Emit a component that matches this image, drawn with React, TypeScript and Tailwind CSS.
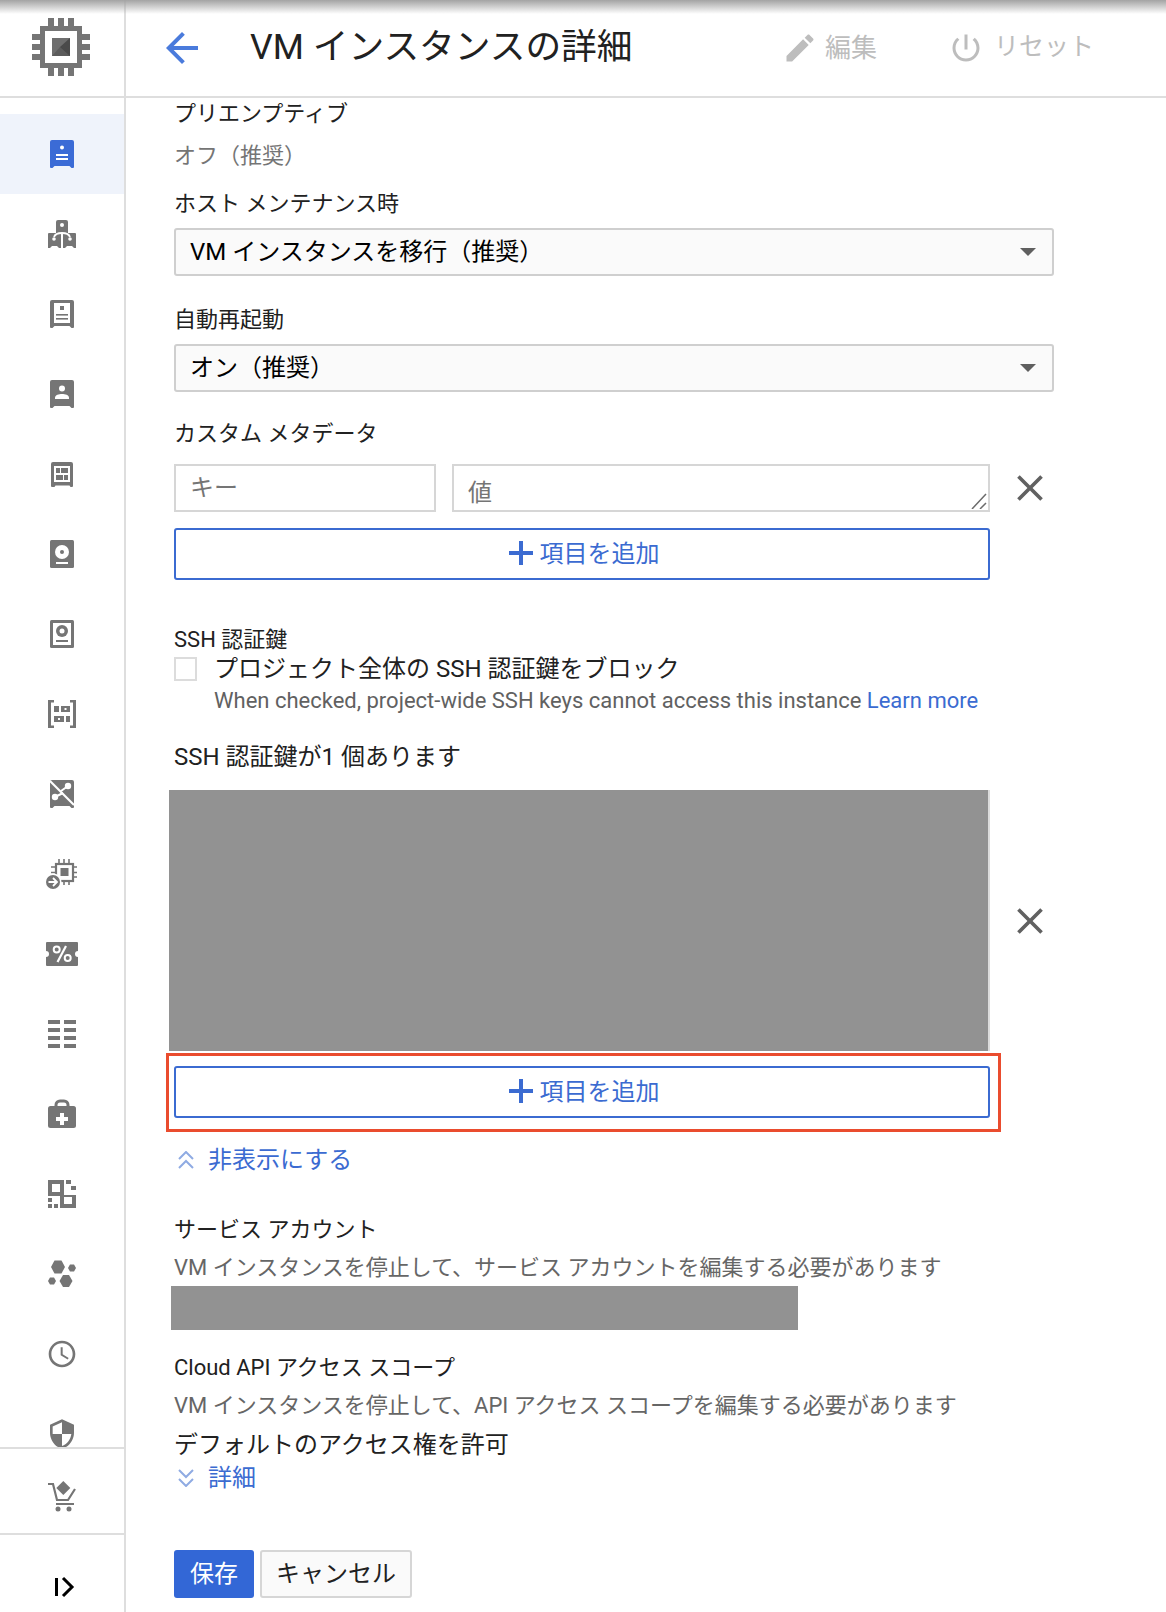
import { type ReactNode } from "react"

const BODY = "M6 2h20a2 2 0 0 1 2 2v25a1 1 0 0 1-1 1h-1.5l-2-2h-15l-2 2H5a1 1 0 0 1-1-1V4a2 2 0 0 1 2-2z"

function Icon({ children, className = "text-[#757575]" }: { children: ReactNode; className?: string }) {
  return (
    <svg width="32" height="32" viewBox="0 0 32 32" fill="currentColor" className={className}>
      {children}
    </svg>
  )
}

const navIcons: ReactNode[] = [
  <Icon className="text-[#3b6bd6]">
    <path d={BODY} />
    <circle cx="16" cy="9.5" r="2" fill="#fff" />
    <rect x="10" y="16" width="12" height="2" fill="#fff" />
    <rect x="10" y="20" width="12" height="2" fill="#fff" />
  </Icon>,
  <Icon>
    <path d="M12 2h8a2 2 0 0 1 2 2v13H10V4a2 2 0 0 1 2-2z" />
    <path d="M3 15h12v15h-2l-2-2H6l-2 2H2V16a1 1 0 0 1 1-1z" />
    <path d="M17 15h12a1 1 0 0 1 1 1v14h-2l-2-2h-5l-2 2h-2z" />
    <circle cx="16" cy="7" r="2" fill="#fff" />
    <path d="M8 19c1-3 4-4 8-4s7 1 8 4" stroke="#fff" strokeWidth="1.800" fill="none" />
    <path d="M16 15v15" stroke="#fff" strokeWidth="2" fill="none" />
    <circle cx="8" cy="21" r="1.800" fill="#fff" />
    <circle cx="24" cy="21" r="1.800" fill="#fff" />
  </Icon>,
  <Icon>
    <path d={BODY} />
    <rect x="8" y="5" width="16" height="20" fill="#fff" />
    <rect x="14" y="8" width="4" height="4" />
    <rect x="10" y="16" width="12" height="1.6" />
    <rect x="10" y="20" width="12" height="1.6" />
  </Icon>,
  <Icon>
    <path d={BODY} />
    <circle cx="16" cy="10.5" r="3" fill="#fff" />
    <path d="M9 21v-1.5c0-2.5 4-3.5 7-3.5s7 1 7 3.5V21z" fill="#fff" />
  </Icon>,
  <Icon>
    <path d="M7 4h18a2 2 0 0 1 2 2v22a1 1 0 0 1-1 1h-1.5l-1-1.5H9.500l-1 1.500H6a1 1 0 0 1-1-1V6a2 2 0 0 1 2-2z" />
    <rect x="8" y="8" width="16" height="16" fill="#fff" />
    <rect x="10" y="10" width="4" height="5" />
    <rect x="15" y="10" width="7" height="5" />
    <rect x="10" y="17" width="7" height="5" />
    <rect x="18" y="17" width="4" height="5" />
  </Icon>,
  <Icon>
    <rect x="4" y="2" width="24" height="28" rx="1.500" />
    <circle cx="16" cy="14" r="7" fill="#fff" />
    <circle cx="16" cy="14" r="2" />
    <rect x="10" y="24" width="12" height="2" fill="#fff" />
  </Icon>,
  <Icon>
    <rect x="4" y="2" width="24" height="28" rx="1.500" />
    <rect x="7" y="5" width="18" height="22" fill="#fff" />
    <circle cx="16" cy="13" r="6" />
    <circle cx="16" cy="13" r="2.500" fill="#fff" />
    <rect x="10" y="22" width="12" height="2" />
  </Icon>,
  <Icon>
    <path d="M2 2h6v2.500H5v23h3V30H2zM30 2h-6v2.500h3v23h-3V30h6z" />
    <rect x="8" y="8" width="5" height="6" />
    <path fillRule="evenodd" d="M15 8h9v6h-9zM18.500 10v2h2v-2z" />
    <path fillRule="evenodd" d="M8 18h10v6H8zM12 20v2h2v-2z" />
    <rect x="20" y="18" width="4" height="6" />
  </Icon>,
  <Icon>
    <path d={BODY} />
    <path d="M4 3l24 24" stroke="#fff" strokeWidth="2.200" fill="none" />
    <path d="M15 13l7-5M17 15l-8 4" stroke="#fff" strokeWidth="2" fill="none" />
    <circle cx="22" cy="8" r="3.200" fill="#fff" />
    <circle cx="9" cy="19" r="3.200" fill="#fff" />
  </Icon>,
  <Icon>
    <path d="M13 1v4M18 1v4M23 1v4M13 24v3M18 24v3M23 24v3M5 9h4M5 14.500h4M28 9h3M28 14.500h3M28 19h3" stroke="currentColor" strokeWidth="1.600" fill="none" />
    <rect x="10" y="6" width="17" height="17" fill="none" stroke="currentColor" strokeWidth="2.200" />
    <rect x="14.500" y="10" width="8" height="8" />
    <circle cx="7" cy="24" r="8.500" fill="#fff" />
    <circle cx="7" cy="24" r="7" />
    <path d="M2.500 24h8M7 20l4 4-4 4" stroke="#fff" strokeWidth="1.800" fill="none" />
  </Icon>,
  <Icon>
    <path d="M1 4h30a1 1 0 0 1 1 1v8a3 3 0 0 0 0 6v8a1 1 0 0 1-1 1H1a1 1 0 0 1-1-1v-8a3 3 0 0 0 0-6V5a1 1 0 0 1 1-1z" />
    <circle cx="10.700" cy="11.500" r="3" fill="none" stroke="#fff" strokeWidth="2" />
    <circle cx="21.700" cy="20" r="3" fill="none" stroke="#fff" strokeWidth="2" />
    <path d="M20 8L11.500 24" stroke="#fff" strokeWidth="2.200" fill="none" />
  </Icon>,
  <Icon>
    {[2, 10, 18, 26].map((y) => (
      <g key={y}>
        <rect x="2" y={y} width="12" height="4" />
        <rect x="18" y={y} width="12" height="4" />
      </g>
    ))}
  </Icon>,
  <Icon>
    <path d="M10 9V7a4 4 0 0 1 4-4h4a4 4 0 0 1 4 4v2" fill="none" stroke="currentColor" strokeWidth="3" />
    <rect x="2" y="8" width="28" height="22" rx="2.500" />
    <rect x="14" y="15" width="4" height="12" fill="#fff" />
    <rect x="10" y="19" width="12" height="4" fill="#fff" />
  </Icon>,
  <Icon>
    <path fillRule="evenodd" d="M2 2h16v16H2zM6 6v8h8V6z" />
    <path fillRule="evenodd" d="M14 17h16v13H14zM18 19v7h8v-7z" />
    <rect x="20" y="2" width="5" height="4" />
    <rect x="25" y="8" width="5" height="4" />
    <rect x="2" y="20" width="4" height="4" />
    <rect x="2" y="26" width="4" height="4" />
    <rect x="8" y="26" width="4" height="4" />
  </Icon>,
  <Icon>
    <polygon points="5,9 8.500,2.500 15.500,2.500 19,9 15.500,15.500 8.500,15.500" />
    <polygon points="22,10 24,6.500 28,6.500 30,10 28,13.500 24,13.500" />
    <polygon points="2,23 4,19.500 8,19.500 10,23 8,26.500 4,26.500" />
    <polygon points="13.500,23 17,17 23,17 26.500,23 23,29 17,29" />
  </Icon>,
  <svg width="32" height="32" viewBox="0 0 24 24" fill="currentColor" className="text-[#757575]">
    <path d="M11.990 2C6.470 2 2 6.480 2 12s4.470 10 9.990 10C17.520 22 22 17.520 22 12S17.520 2 11.990 2zM12 20c-4.420 0-8-3.580-8-8s3.580-8 8-8 8 3.580 8 8-3.580 8-8 8zm.5-13H11v6l5.250 3.150.75-1.230-4.500-2.670z" />
  </svg>,
  <svg width="32" height="32" viewBox="0 0 24 24" fill="currentColor" className="text-[#757575]">
    <path d="M12 1L3 5v6c0 5.550 3.840 10.740 9 12 5.160-1.260 9-6.450 9-12V5l-9-4zm0 10.990h7c-.53 4.120-3.280 7.790-7 8.940V12H5V6.300l7-3.110v8.800z" />
  </svg>,
]

function Logo() {
  return (
    <svg width="58" height="58" viewBox="32 18 58 58">
      <g fill="#757575">
        <rect x="48" y="18" width="6" height="8" />
        <rect x="58" y="18" width="6" height="8" />
        <rect x="68" y="18" width="6" height="8" />
        <rect x="48" y="68" width="6" height="8" />
        <rect x="58" y="68" width="6" height="8" />
        <rect x="68" y="68" width="6" height="8" />
        <rect x="32" y="34" width="8" height="6" />
        <rect x="32" y="44" width="8" height="6" />
        <rect x="32" y="54" width="8" height="6" />
        <rect x="82" y="34" width="8" height="6" />
        <rect x="82" y="44" width="8" height="6" />
        <rect x="82" y="54" width="8" height="6" />
        <path fillRule="evenodd" d="M40 26h42v42H40zM45 31v32h32V31z" />
      </g>
      <rect x="52" y="38" width="18" height="18" fill="#6e6e6e" />
      <path d="M70 38v18H60l-0-9z" fill="#4a4a4a" />
      <path d="M52 56l8-9 10 9z" fill="#5c5c5c" />
    </svg>
  )
}

function Sidebar() {
  return (
    <aside className="flex w-[126px] shrink-0 flex-col border-r-2 border-[#dedede]">
      <div className="flex h-[98px] shrink-0 items-center justify-center border-b-2 border-[#dedede] pb-[3px] pr-[2px]">
        <Logo />
      </div>
      <nav className="h-[1349px] shrink-0 overflow-hidden pt-[16px]">
        {navIcons.map((icon, i) => (
          <div key={i} className={`flex h-[80px] items-center justify-center ${i === 0 ? "bg-[#eff3fb]" : ""}`}>
            {icon}
          </div>
        ))}
      </nav>
      <div className="flex h-[86px] shrink-0 items-center justify-center border-t-2 border-[#dedede] pt-[10px]">
        <Icon>
          <path d="M17.300 1l7 7-7 7-7-7z" />
          <path d="M2 4h5l4 16h11l7-11M10 24h18" fill="none" stroke="currentColor" strokeWidth="2.200" />
          <circle cx="12" cy="29" r="2.500" />
          <circle cx="23" cy="29" r="2.500" />
        </Icon>
      </div>
      <div className="flex flex-1 items-center justify-center border-t-2 border-[#dedede] pt-[26px]">
        <svg width="32" height="32" viewBox="0 0 32 32">
          <rect x="9" y="7" width="3" height="18" fill="#000" />
          <path d="M17 7l9 9-9 9" fill="none" stroke="#000" strokeWidth="3" />
        </svg>
      </div>
    </aside>
  )
}

function Select({ value }: { value: string }) {
  return (
    <div className="flex h-[48px] w-[880px] items-center justify-between rounded-[3px] border-2 border-[#cfcfcf] bg-[#fafafa] pl-[14px] pr-[16px]">
      <span className="text-[24px] leading-none text-black">{value}</span>
      <svg width="16" height="8" viewBox="0 0 16 8">
        <path d="M0 0h16L8 8z" fill="#5f5f5f" />
      </svg>
    </div>
  )
}

function AddButton() {
  return (
    <button className="flex h-[52px] w-[816px] items-center justify-center gap-[7px] rounded-[3px] border-2 border-[#3b6bd1] bg-white pl-[4px] text-[24px] leading-none text-[#3b6bd1]">
      <svg width="24" height="24" viewBox="0 0 24 24" className="-mt-[2px]">
        <path d="M10 0h4v10h10v4H14v10h-4V14H0v-4h10z" fill="#3b6bd1" />
      </svg>
      項目を追加
    </button>
  )
}

function CloseIcon() {
  return (
    <svg width="44" height="44" viewBox="0 0 24 24" fill="#616161" className="ml-[18px] shrink-0">
      <path d="M19 6.410L17.590 5 12 10.590 6.410 5 5 6.410 10.590 12 5 17.590 6.410 19 12 13.410 17.590 19 19 17.590 13.410 12z" />
    </svg>
  )
}

function Toggle({ label, up }: { label: string; up?: boolean }) {
  return (
    <div className="flex h-[30px] items-center text-[24px] text-[#3b6bd1]">
      <svg width="16" height="18" viewBox="0 0 16 18" fill="none" stroke="#8fabe3" strokeWidth="2" className="ml-[4px] mr-[14px]">
        {up ? <path d="M1 8l7-7 7 7M1 17l7-7 7 7" /> : <path d="M1 1l7 7 7-7M1 10l7 7 7-7" />}
      </svg>
      {label}
    </div>
  )
}

export default function App() {
  return (
    <div className="relative flex h-[1612px] w-[1166px] overflow-hidden bg-white font-['Roboto','Noto_Sans_CJK_JP',sans-serif] text-[22px] leading-[30px] text-[#212121]">
      {/* top shadow of the browser chrome */}
      <div className="absolute inset-x-0 top-0 z-10 h-[14px] bg-gradient-to-b from-[#a3a3a3] to-transparent" />
      <Sidebar />
      <div className="flex min-w-0 flex-1 flex-col">
        <header className="flex h-[98px] shrink-0 items-center border-b-2 border-[#dedede]">
          <svg width="48" height="48" viewBox="0 0 24 24" fill="#4a7bdc" className="ml-[32px]">
            <path d="M20 11H7.830l5.590-5.590L12 4l-8 8 8 8 1.410-1.410L7.830 13H20v-2z" />
          </svg>
          <h1 className="ml-[44px] text-[35.7px] leading-none font-normal text-[#212121]">VM インスタンスの詳細</h1>
          <div className="ml-auto flex items-center text-[26px] leading-none text-[#bdbdbd]">
            <svg width="36" height="36" viewBox="0 0 24 24" fill="#bdbdbd">
              <path d="M3 17.250V21h3.750L17.810 9.940l-3.750-3.750L3 17.250zM20.710 7.040c.39-.39.39-1.020 0-1.410l-2.340-2.340c-.39-.39-1.020-.39-1.410 0l-1.830 1.830 3.750 3.750 1.830-1.830z" />
            </svg>
            <span className="ml-[7px]">編集</span>
            <svg width="36" height="36" viewBox="0 0 24 24" fill="#bdbdbd" className="ml-[71px]">
              <path d="M13 3h-2v10h2V3zm4.830 2.170l-1.420 1.420C17.990 7.860 19 9.810 19 12c0 3.870-3.130 7-7 7s-7-3.130-7-7c0-2.190 1.010-4.140 2.580-5.420L6.170 5.170C4.230 6.820 3 9.260 3 12c0 4.970 4.030 9 9 9s9-4.030 9-9c0-2.740-1.230-5.180-3.170-6.830z" />
            </svg>
            <span className="ml-[10px] mr-[72px] -mt-[3px] text-[25px]">リセット</span>
          </div>
        </header>

        <main className="flex flex-col items-start pl-[48px]">
          <div className="mt-px">プリエンプティブ</div>
          <div className="mt-[12px] text-[#757575]">オフ（推奨）</div>
          <div className="mt-[18px]">ホスト メンテナンス時</div>
          <div className="mt-[9px]">
            <Select value="VM インスタンスを移行（推奨）" />
          </div>
          <div className="mt-[29px]">自動再起動</div>
          <div className="mt-[9px]">
            <Select value="オン（推奨）" />
          </div>
          <div className="mt-[27px]">カスタム メタデータ</div>
          <div className="mt-[15px] flex items-center">
            <input
              placeholder="キー"
              className="h-[48px] w-[262px] border-2 border-[#d6d6d6] bg-white px-[14px] text-[24px] outline-none placeholder:text-[#757575]"
            />
            <div className="relative ml-[16px] h-[48px] w-[538px]">
              <textarea
                placeholder="値"
                className="h-full w-full resize-none border-2 border-[#d6d6d6] bg-white px-[14px] pt-[12px] text-[24px] leading-[30px] outline-none placeholder:text-[#757575]"
              />
              <svg width="16" height="16" viewBox="0 0 16 16" className="absolute bottom-[3px] right-[3px]" stroke="#6b6b6b" strokeWidth="1.500">
                <path d="M1 16L15 1M9 16l6-6" />
              </svg>
            </div>
            <CloseIcon />
          </div>
          <div className="mt-[16px]">
            <AddButton />
          </div>
          <div className="mt-[45px]">SSH 認証鍵</div>
          <label className="-mt-px flex h-[30px] items-center text-[24px]">
            <span className="h-[24px] w-[23px] border-2 border-[#dcdcdc] bg-white" />
            <span className="ml-[17px]">プロジェクト全体の SSH 認証鍵をブロック</span>
          </label>
          <div className="mt-[2px] pl-[40px] text-[#616161]">
            When checked, project-wide SSH keys cannot access this instance <span className="text-[#3b6bd1]">Learn more</span>
          </div>
          <div className="mt-[26px] text-[24px]">SSH 認証鍵が1 個あります</div>
          <div className="mt-[18px] -ml-[5px] flex items-center">
            <div className="h-[261px] w-[821px] border-r-2 border-[#dcdcdc] bg-[#929292]" />
            <CloseIcon />
          </div>
          <div className="mt-[2px] -ml-[8px] h-[79px] w-[835px] border-[3px] border-[#ea4c2e] pl-[5px] pt-[10px]">
            <AddButton />
          </div>
          <div className="mt-[13px]">
            <Toggle label="非表示にする" up />
          </div>
          <div className="mt-[40px]">サービス アカウント</div>
          <div className="mt-[8px] text-[#666666]">VM インスタンスを停止して、サービス アカウントを編集する必要があります</div>
          <div className="mt-[3px] -ml-[3px] h-[44px] w-[627px] bg-[#929292]" />
          <div className="mt-[23px]">Cloud API アクセス スコープ</div>
          <div className="mt-[8px] text-[#666666]">VM インスタンスを停止して、API アクセス スコープを編集する必要があります</div>
          <div className="mt-[9px] text-[24px]">デフォルトのアクセス権を許可</div>
          <div className="mt-[3px]">
            <Toggle label="詳細" />
          </div>
          <div className="mt-[57px] flex gap-[6px]">
            <button className="h-[48px] w-[80px] rounded-[3px] bg-[#3367d6] text-[24px] text-white">保存</button>
            <button className="h-[48px] w-[152px] rounded-[3px] border-2 border-[#d6d6d6] bg-[#fafafa] text-[24px] text-[#212121]">キャンセル</button>
          </div>
        </main>
      </div>
    </div>
  )
}
